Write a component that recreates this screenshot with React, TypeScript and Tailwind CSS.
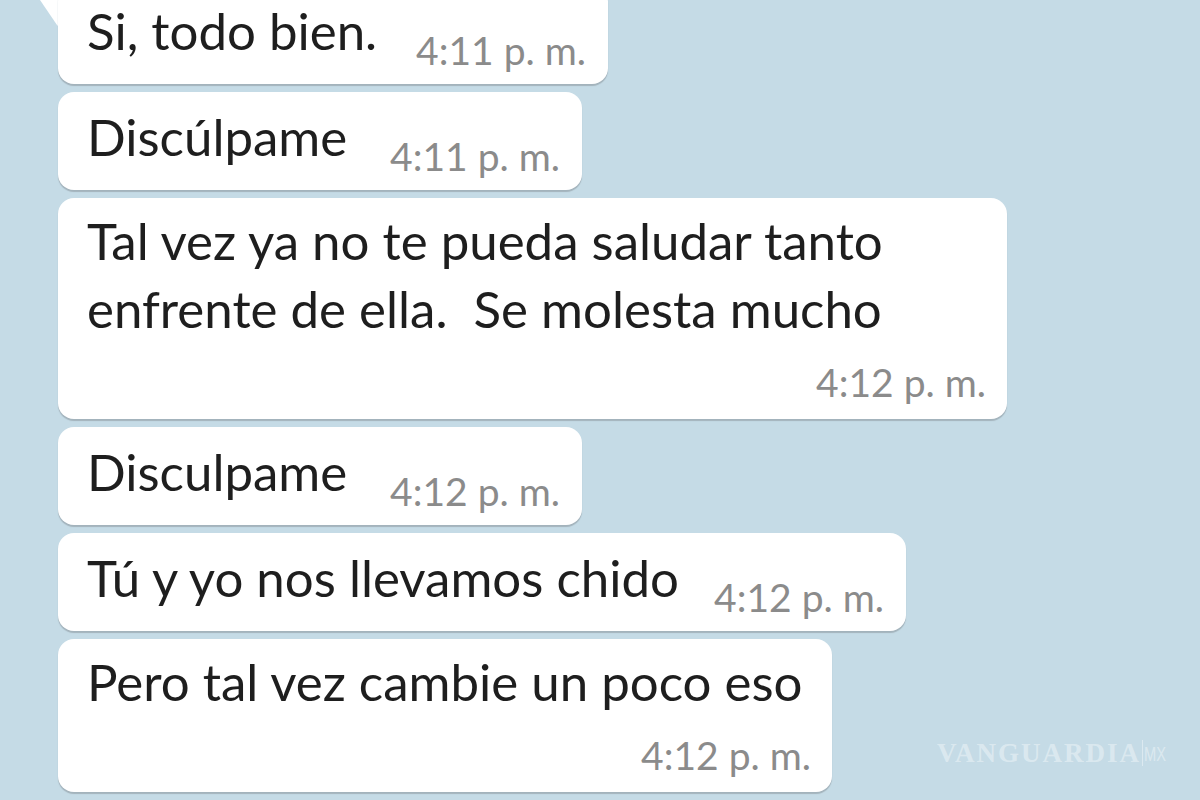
import React from "react";

const FONT = { fontFamily: "Lato, 'Noto Sans', sans-serif" };

const SHADOW = "shadow-[0_2px_1px_#a3b3bc]";

function Single({ text, time, width }: { text: string; time: string; width: string }) {
  return (
    <div
      className={`relative bg-white rounded-[16px] ${SHADOW} pl-[29px] pr-[22px] h-[98px] flex items-start justify-between ${width}`}
    >
      <span className="mt-[11px] text-[51px] leading-[68px] text-[#1e1e1e] whitespace-pre">
        {text}
      </span>
      <span className="mt-[44px] text-[39px] leading-[40px] text-[#8b8b8b] whitespace-pre">
        {time}
      </span>
    </div>
  );
}

function Multi({ lines, time, width }: { lines: string[]; time: string; width: string }) {
  return (
    <div className={`relative bg-white rounded-[16px] ${SHADOW} pl-[29px] pr-[21px] pt-[9px] pb-[17px] ${width}`}>
      {lines.map((l, i) => (
        <div key={i} className="text-[51px] leading-[68px] text-[#1e1e1e] whitespace-pre">
          {l}
        </div>
      ))}
      <div className="flex justify-end mt-[19px]">
        <span className="text-[39px] leading-[40px] text-[#8b8b8b] whitespace-pre">{time}</span>
      </div>
    </div>
  );
}

export default function App() {
  return (
    <div className="relative w-[1200px] h-[800px] overflow-hidden bg-[#c5dbe6]" style={FONT}>
      <div className="flex flex-col items-start gap-[8px] pl-[58px] mt-[-14px]">
        <div className="relative">
          <svg className="absolute left-[-18px] top-[14px]" width="20" height="28" viewBox="0 0 20 28">
            <path d="M0 0 L20 0 L20 28 L17 25 Z" fill="#ffffff" />
          </svg>
          <Single text="Si, todo bien." time="4:11 p. m." width="w-[550px]" />
        </div>
        <Single text="Discúlpame" time="4:11 p. m." width="w-[524px]" />
        <Multi
          lines={["Tal vez ya no te pueda saludar tanto", "enfrente de ella.  Se molesta mucho"]}
          time="4:12 p. m."
          width="w-[949px]"
        />
        <Single text="Disculpame" time="4:12 p. m." width="w-[524px]" />
        <Single text="Tú y yo nos llevamos chido" time="4:12 p. m." width="w-[848px]" />
        <Multi lines={["Pero tal vez cambie un poco eso"]} time="4:12 p. m." width="w-[774px]" />
      </div>
      <div className="absolute left-[937px] top-[733px] flex items-center text-white/40">
        <span
          className="text-[27px] font-bold tracking-[2px]"
          style={{ fontFamily: "'Liberation Serif', serif" }}
        >
          VANGUARDIA
        </span>
        <span className="ml-[1px] h-[26px] w-[1px] bg-white/40" />
        <span
          className="text-[21px] ml-[1px] inline-block"
          style={{ fontFamily: "'Liberation Sans', sans-serif", transform: "scaleX(0.7)", transformOrigin: "left" }}
        >
          MX
        </span>
      </div>
    </div>
  );
}
